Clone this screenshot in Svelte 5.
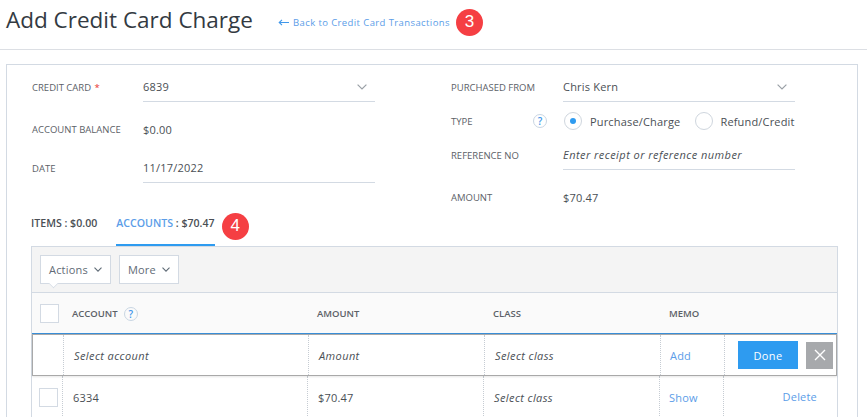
<script>
  const cols = ['ACCOUNT', 'AMOUNT', 'CLASS', 'MEMO'];
</script>

<div class="page">
  <header class="head">
    <h1>Add Credit Card Charge</h1>
    <a class="back"><svg class="arrow" width="11" height="7" viewBox="0 0 11 7"><path d="M11 3.5H1.5M4 .8L1.2 3.5 4 6.2" fill="none" stroke="#3f97ea" stroke-width="1.1"/></svg>Back to Credit Card Transactions</a>
    <span class="badge b3">3</span>
  </header>

  <section class="panel">
    <div class="form">
      <div class="col left">
        <div class="row r-first">
          <span class="lab">CREDIT CARD <i class="req">*</i></span>
          <div class="field line sel">6839
            <svg class="chev" width="10" height="6" viewBox="0 0 10 6"><path d="M.6.6L5 5 9.4.6" fill="none" stroke="#9aa0a6" stroke-width="1.2"/></svg>
          </div>
        </div>
        <div class="row r-bal">
          <span class="lab">ACCOUNT BALANCE</span>
          <div class="field">$0.00</div>
        </div>
        <div class="row r-date">
          <span class="lab">DATE</span>
          <div class="field line">11/17/2022</div>
        </div>
      </div>
      <div class="col">
        <div class="row r-first">
          <span class="lab">PURCHASED FROM</span>
          <div class="field line sel">Chris Kern
            <svg class="chev" width="10" height="6" viewBox="0 0 10 6"><path d="M.6.6L5 5 9.4.6" fill="none" stroke="#9aa0a6" stroke-width="1.2"/></svg>
          </div>
        </div>
        <div class="row r-type">
          <span class="lab lab-q">TYPE <span class="q">?</span></span>
          <div class="radios">
            <span class="radio on"></span><span class="rt">Purchase/Charge</span>
            <span class="radio second"></span><span class="rt">Refund/Credit</span>
          </div>
        </div>
        <div class="row r-ref">
          <span class="lab">REFERENCE NO</span>
          <div class="field line ph">Enter receipt or reference number</div>
        </div>
        <div class="row r-amt">
          <span class="lab">AMOUNT</span>
          <div class="field">$70.47</div>
        </div>
      </div>
    </div>

    <div class="tabs">
      <span class="tab">ITEMS : $0.00</span>
      <span class="tab active"><b>ACCOUNTS</b> : $70.47</span>
      <span class="badge b4">4</span>
    </div>

    <div class="table">
      <div class="toolbar">
        <button class="btn notch">Actions
          <svg width="8" height="5" viewBox="0 0 8 5"><path d="M.5.6L4 4.1 7.5.6" fill="none" stroke="#5f6b76" stroke-width="1.1"/></svg>
        </button>
        <button class="btn">More
          <svg width="8" height="5" viewBox="0 0 8 5"><path d="M.5.6L4 4.1 7.5.6" fill="none" stroke="#5f6b76" stroke-width="1.1"/></svg>
        </button>
      </div>
      <div class="grid thead">
        <div class="c-check"><span class="box"></span></div>
        {#each cols as c, i}
          <div class="th">{c}{#if i === 0}<span class="q q-th">?</span>{/if}</div>
        {/each}
        <div></div>
      </div>
      <div class="editwrap">
        <div class="grid edit">
          <div class="cell first"></div>
          <div class="cell ph">Select account</div>
          <div class="cell ph">Amount</div>
          <div class="cell ph">Select class</div>
          <div class="cell link">Add</div>
          <div class="cell acts">
            <button class="done">Done</button>
            <button class="close" aria-label="Close">
              <svg width="12" height="12" viewBox="0 0 12 12"><path d="M1 1l10 10M11 1L1 11" stroke="#fff" stroke-width="1.4"/></svg>
            </button>
          </div>
        </div>
      </div>
      <div class="grid body">
        <div class="cell first"><span class="box"></span></div>
        <div class="cell">6334</div>
        <div class="cell">$70.47</div>
        <div class="cell ph">Select class</div>
        <div class="cell link">Show</div>
        <div class="cell del"><span class="link">Delete</span></div>
      </div>
    </div>
  </section>
</div>

<style>
  :global(html), :global(body) { margin: 0; height: 417px; overflow: hidden; background: #fff; }
  .page { width: 867px; height: 417px; overflow: hidden; font-family: "Open Sans", sans-serif; font-size: 11px; color: #4a4f55; }
  .head { height: 49px; border-bottom: 1px solid #dcdfe4; display: flex; align-items: center; padding-left: 6px; }
  h1 { margin: 0 0 9px; font-size: 22.5px; font-weight: 400; color: #333a42; line-height: 32px; width: 272px; white-space: nowrap; }
  .back { color: #5b9de8; font-size: 9.5px; letter-spacing: .4px; width: 174px; white-space: nowrap; margin-bottom: 4px; display: flex; align-items: center; }
  .arrow { margin-right: 4px; flex: none; }
  .badge { width: 27px; height: 27px; border-radius: 50%; background: #f53f43; color: #fff; font-family: "Liberation Sans", sans-serif; font-size: 17px; display: flex; align-items: center; justify-content: center; flex: none; }
  .b3 { margin: 0 0 5px 4px; }
  .panel { margin: 14px 9px 0 6px; border: 1px solid #d3dae3; border-bottom: 0; height: 360px; padding: 0 19px 0 24px; }
  .form { display: flex; height: 142px; padding-top: 7px; }
  .col { width: 344px; flex: none; }
  .col + .col { margin-left: 76px; }
  .row { display: flex; align-items: center; }
  .lab { width: 112px; flex: none; font-size: 9.5px; color: #5c6167; white-space: nowrap; }
  .left .lab { margin-left: 1px; width: 111px; }
  .req { color: #e8332f; font-style: normal; margin-left: 1px; }
  .field { width: 232px; font-size: 11px; letter-spacing: .2px; color: #4a4f55; box-sizing: border-box; height: 100%; display: flex; align-items: center; }
  .line { border-bottom: 1px solid #d3dae3; }
  .sel { justify-content: space-between; padding-right: 8px; }
  .ph { font-style: italic; letter-spacing: .45px; }
  .r-first { height: 30px; }
  .r-bal { height: 51px; padding-top: 3px; box-sizing: border-box; }
  .r-date { height: 30px; }
  .r-type { height: 34px; margin-top: 2px; }
  .r-ref { height: 32px; padding-top: 2px; box-sizing: border-box; }
  .r-amt { height: 54px; }
  .lab-q { display: flex; align-items: center; justify-content: space-between; padding-right: 16px; box-sizing: border-box; }
  .q { width: 12px; height: 12px; border-radius: 50%; border: 1px solid #c9d6e3; color: #3f97ea; font-size: 10px; font-weight: 600; display: inline-flex; align-items: center; justify-content: center; }
  .q-th { margin-left: 6px; }
  .radios { display: flex; align-items: center; width: 234px; font-size: 11px; letter-spacing: .17px; white-space: nowrap; margin-left: 1px; }
  .radio { width: 16px; height: 16px; border: 1px solid #cfd6de; border-radius: 50%; flex: none; position: relative; margin-right: 8px; }
  .radio.second { margin-left: 15px; margin-right: 7px; }
  .on::after { content: ""; position: absolute; left: 5px; top: 5px; width: 6px; height: 6px; border-radius: 50%; background: #2e9bf0; }
  .tabs { display: flex; align-items: center; height: 38px; margin-top: -6px; }
  .tab { font-size: 10.6px; font-weight: 600; color: #4a4f55; height: 38px; line-height: 30px; margin-right: 19px; box-sizing: border-box; white-space: nowrap; }
  .tab.active { margin-right: 7px; border-bottom: 2px solid #2e9bf0; }
  .tab b { color: #5b9de8; font-weight: 600; }
  .b4 { margin-bottom: 2px; }
  .table { border: 1px solid #d3dae3; border-bottom: 0; width: 805px; background: #fff; }
  .toolbar { height: 45px; background: #f4f4f4; border-bottom: 1px solid #d3dae3; display: flex; align-items: center; gap: 8px; padding: 0 0 0 8px; }
  .btn { height: 29px; background: #fff; border: 1px solid #d3dae3; font: 11px "Open Sans", sans-serif; color: #5f6b76; padding: 0 8px; display: flex; align-items: center; gap: 6px; position: relative; letter-spacing: .2px; }
  .notch::after { content: ""; position: absolute; left: 8px; bottom: -5px; width: 8px; height: 8px; background: #fff; border-right: 1px solid #d3dae3; border-bottom: 1px solid #d3dae3; transform: rotate(45deg) scale(.75); }
  .grid { display: grid; grid-template-columns: 31px 245px 176px 176px 64px 113px; }
  .thead { height: 39px; padding-top: 1px; background: #fafafa; align-items: center; border-bottom: 1px solid #3a8fd8; }
  .c-check { padding-left: 8px; display: flex; }
  .box { width: 17px; height: 17px; background: #fff; border: 1px solid #d3dae3; display: block; }
  .th { font-size: 9.5px; font-weight: 600; color: #5c6167; padding-left: 9px; display: flex; align-items: center; }
  .edit { height: 40px; border: 1px solid #a9a9a9; box-shadow: 0 1px 2px rgba(0,0,0,.1); position: relative; }
  .cell { display: flex; align-items: center; padding-left: 10px; border-right: 1px dotted #c6ccd3; font-size: 11px; letter-spacing: .2px; color: #4a4f55; min-width: 0; }
  .grid .first { padding-left: 7px; }
  .grid > .cell:last-child { border-right: 0; }
  .link { color: #5b9de8; }
  .cell.link { color: #5b9de8; padding-left: 9px; }
  .cell.ph { letter-spacing: .4px; }
  .acts { padding-left: 13px; gap: 8px; }
  .done { width: 60px; height: 28px; border: 0; background: #2e9bf0; color: #fff; font: 400 11px "Open Sans", sans-serif; letter-spacing: .4px; }
  .close { width: 27px; height: 27px; border: 0; background: #a7a9ac; padding: 0; display: flex; align-items: center; justify-content: center; }
  .body { height: 42px; }
  .del { justify-content: flex-end; padding-right: 20px; padding-bottom: 2px; }
</style>
